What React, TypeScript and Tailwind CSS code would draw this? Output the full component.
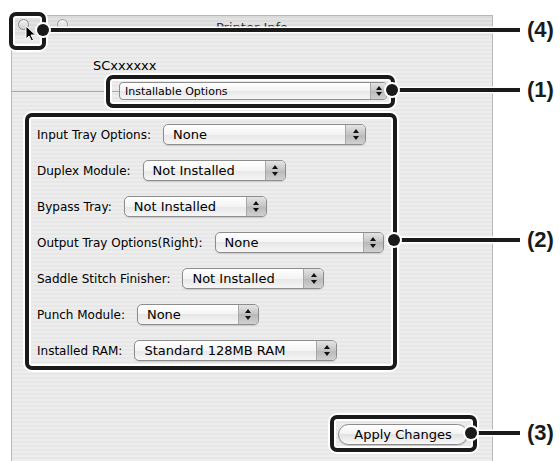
import React from 'react';

const font = { fontFamily: '"DejaVu Sans", "Liberation Sans", sans-serif' };

type Row = { label: string; value: string; width: number };

const rows: Row[] = [
  { label: 'Input Tray Options:', value: 'None', width: 203 },
  { label: 'Duplex Module:', value: 'Not Installed', width: 143 },
  { label: 'Bypass Tray:', value: 'Not Installed', width: 143 },
  { label: 'Output Tray Options(Right):', value: 'None', width: 169 },
  { label: 'Saddle Stitch Finisher:', value: 'Not Installed', width: 142 },
  { label: 'Punch Module:', value: 'None', width: 122 },
  { label: 'Installed RAM:', value: 'Standard 128MB RAM', width: 203 },
];

function Stepper({ small }: { small?: boolean }) {
  return (
    <div
      className={`flex flex-col items-center justify-center border-l border-[#a8a8a8] bg-[linear-gradient(#e4e4e4,#c4c4c4_50%,#b8b8b8_50%,#d0d0d0)] ${
        small ? 'w-[16px] gap-[2px]' : 'w-[20px] gap-[3px]'
      }`}
    >
      <svg width="6" height="4" viewBox="0 0 6 4">
        <path d="M3 0L6 4H0z" fill="#111" />
      </svg>
      <svg width="6" height="4" viewBox="0 0 6 4">
        <path d="M0 0H6L3 4z" fill="#111" />
      </svg>
    </div>
  );
}

function Popup({ value, width }: { value: string; width: number }) {
  return (
    <div
      className="flex h-[21px] shrink-0 overflow-hidden rounded-[5px] border border-[#8c8c8c] bg-[linear-gradient(#ffffff,#f4f4f4_50%,#e6e6e6_50%,#f6f6f6)] shadow-[0_1px_1px_rgba(0,0,0,0.12)]"
      style={{ width }}
    >
      <div className="flex flex-1 items-center pl-[9px] text-[13px] leading-none text-black">{value}</div>
      <Stepper />
    </div>
  );
}

function Callout({ className }: { className: string }) {
  return (
    <div
      className={`absolute rounded-[7px] border-[4px] border-[#1a1a1a] shadow-[0_0_0_2px_white,inset_0_0_0_2px_white] ${className}`}
    />
  );
}

function Leader({ y, x, label }: { y: number; x: number; label: string }) {
  return (
    <>
      <div
        className="absolute h-[4px] bg-[#1a1a1a] shadow-[0_0_0_1.5px_white]"
        style={{ top: y - 2, left: x, width: 520 - x }}
      />
      <div
        className="absolute h-[12px] w-[12px] rounded-full bg-[#1a1a1a] shadow-[0_0_0_2px_white]"
        style={{ top: y - 6, left: x - 6 }}
      />
      <div
        className="absolute text-[22px] font-bold leading-none text-[#1a1a1a]"
        style={{ top: y - 11, left: 527, fontFamily: '"Liberation Sans", Arial, sans-serif' }}
      >
        {label}
      </div>
    </>
  );
}

export default function App() {
  return (
    <div className="relative h-[461px] w-[560px] overflow-hidden bg-white" style={font}>
      {/* window */}
      <div className="ml-[11px] mt-[15px] flex h-[446px] w-[482px] flex-col border-x border-t border-[#b8b8b8] bg-[repeating-linear-gradient(0deg,#ededed_0px,#ededed_2px,#e7e7e7_2px,#e7e7e7_4px)]">
        <div className="relative flex h-[20px] shrink-0 justify-center bg-[repeating-linear-gradient(0deg,#e2e2e2_0px,#e2e2e2_2px,#dadada_2px,#dadada_4px)]">
          <div className="absolute left-[6px] top-[3px] flex gap-[28px]">
            <div className="h-[11px] w-[11px] rounded-full border border-[#8a8a8a] bg-[linear-gradient(#f4f4f4,#cfcfcf)]" />
            <div className="h-[11px] w-[11px] rounded-full border border-[#9a9a9a] bg-[linear-gradient(#f4f4f4,#d6d6d6)]" />
          </div>
          <span className="pt-[5px] text-[13px] leading-none text-[#333]">Printer Info</span>
        </div>

        <div className="mt-[22px] pl-[81px] text-[13px] leading-[16px] text-black">SCxxxxxx</div>

        <div className="mt-[8px] flex h-[18px] items-center">
          <div className="h-px w-[107px] bg-[#a8a8a8]" />
          <div className="flex h-[18px] w-[268px] overflow-hidden rounded-[4px] border border-[#8c8c8c] bg-[linear-gradient(#ffffff,#f3f3f3_50%,#e6e6e6_50%,#f6f6f6)]">
            <div className="flex flex-1 items-center pl-[5px] text-[11px] leading-none text-black">Installable Options</div>
            <Stepper small />
          </div>
          <div className="h-px flex-1 bg-[#a8a8a8]" />
        </div>

        <div className="mt-[24px] flex flex-col gap-[15px] pl-[25px]">
          {rows.map((r) => (
            <div key={r.label} className="flex items-center gap-[12px]">
              <span className="text-[12px] leading-none text-black">{r.label}</span>
              <Popup value={r.value} width={r.width} />
            </div>
          ))}
        </div>

        <div className="mb-[16px] mr-[24px] mt-auto flex justify-end">
          <div className="flex h-[21px] w-[130px] items-center justify-center rounded-full border border-[#8c8c8c] bg-[linear-gradient(#ffffff,#f2f2f2_50%,#e2e2e2_50%,#f8f8f8)] text-[13px] leading-none text-black shadow-[0_1px_1px_rgba(0,0,0,0.15)]">
            Apply Changes
          </div>
        </div>
      </div>

      {/* cursor */}
      <svg className="absolute left-[25px] top-[25px]" width="12" height="17" viewBox="0 0 12 17">
        <path d="M1 1L1 14L4 11L6.5 16L8.5 15L6 10L10.5 10Z" fill="#000" stroke="#fff" strokeWidth="1" strokeLinejoin="round" />
      </svg>

      {/* callouts */}
      <Callout className="left-[9px] top-[12px] h-[38px] w-[37px]" />
      <Callout className="left-[106px] top-[75px] h-[33px] w-[289px]" />
      <Callout className="left-[25px] top-[113px] h-[257px] w-[372px]" />
      <Callout className="left-[330px] top-[415px] h-[37px] w-[147px]" />

      <Leader y={30} x={43} label="(4)" />
      <Leader y={90} x={392} label="(1)" />
      <Leader y={240} x={394} label="(2)" />
      <Leader y={433} x={471} label="(3)" />
    </div>
  );
}
